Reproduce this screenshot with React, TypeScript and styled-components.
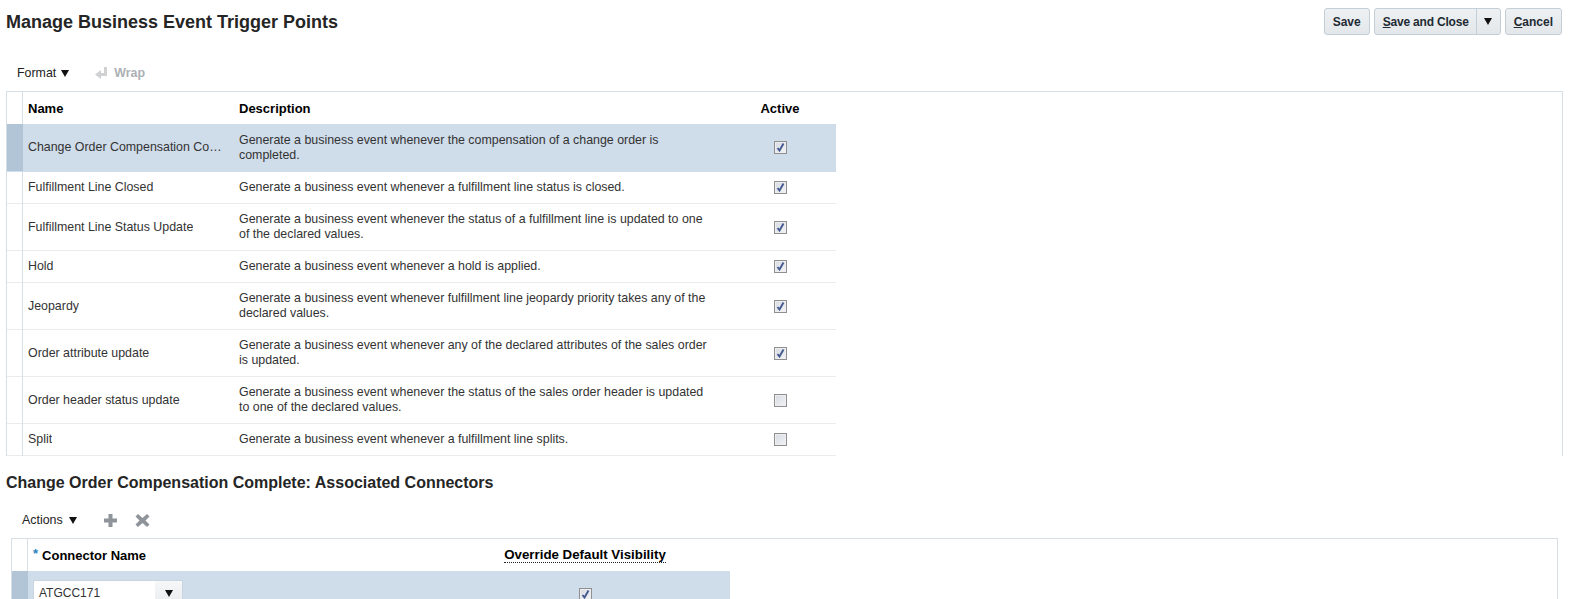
import styled, { createGlobalStyle } from "styled-components";

const GlobalStyle = createGlobalStyle`
  html, body {
    margin: 0;
    padding: 0;
    height: 599px;
    overflow: hidden;
    background: #fff;
    font-family: "Liberation Sans", Arial, sans-serif;
    font-size: 12px;
    color: #333;
  }
`;

const Page = styled.div`
  width: 1569px;
  height: 599px;
  overflow: hidden;
`;

const Header = styled.div`
  display: flex;
  justify-content: space-between;
  align-items: flex-start;
  height: 50px;
  padding: 8px 7px 0 6px;
`;

const Title = styled.h1`
  margin: 4px 0 0;
  font-size: 18px;
  line-height: 20px;
  font-weight: bold;
  color: #252525;
`;

const Buttons = styled.div`
  display: flex;
  gap: 4px;
`;

const Button = styled.div`
  display: flex;
  align-items: center;
  height: 25px;
  padding: 0 8px;
  border: 1px solid #c4ced7;
  border-radius: 3px;
  background: linear-gradient(#eef1f3, #e3e7ea);
  font-size: 12px;
  font-weight: bold;
  color: #1f2a33;
`;

const SplitMain = styled.span`
  display: flex;
  align-items: center;
  height: 100%;
  padding-right: 7px;
  margin-right: 7px;
  border-right: 1px solid #c4ced7;
  letter-spacing: -0.2px;
`;

const Toolbar = styled.div<{ $left: number; $top?: number }>`
  display: flex;
  align-items: center;
  height: 30px;
  margin-top: ${({ $top }) => $top ?? 0}px;
  margin-bottom: 3px;
  padding-left: ${({ $left }) => $left}px;
`;

const Menu = styled.span`
  color: #222;
  font-size: 12.4px;
`;

const Arrow = styled.span<{ $gap?: number }>`
  display: inline-block;
  width: 0;
  height: 0;
  margin-left: ${({ $gap }) => $gap ?? 0}px;
  border-left: 4.5px solid transparent;
  border-right: 4.5px solid transparent;
  border-top: 7px solid #111;
`;

const WrapLabel = styled.span`
  margin-left: 6px;
  font-size: 12.4px;
  font-weight: bold;
  color: #acb0b4;
`;

const ToolIcon = styled.svg<{ $left: number }>`
  display: block;
  margin-left: ${({ $left }) => $left}px;
`;

const TableBox = styled.div<{ $ml: number; $mr: number; $h: number }>`
  margin: 0 ${({ $mr }) => $mr}px 0 ${({ $ml }) => $ml}px;
  height: ${({ $h }) => $h}px;
  border: 1px solid #d6dfe6;
  border-bottom: none;
`;

const Row = styled.div<{ $h: number; $selected?: boolean; $w: number; $plain?: boolean }>`
  display: flex;
  align-items: stretch;
  width: ${({ $w }) => $w}px;
  height: ${({ $h }) => $h}px;
  box-sizing: border-box;
  background: ${({ $selected }) => ($selected ? "#cfdcea" : "transparent")};
  border-bottom: 1px solid ${({ $plain, $selected }) => ($plain || $selected ? "transparent" : "#ebebeb")};
`;

const Gutter = styled.div<{ $selected?: boolean }>`
  flex: 0 0 15px;
  background: ${({ $selected }) => ($selected ? "#b1c5d6" : "transparent")};
  border-right: 1px solid ${({ $selected }) => ($selected ? "#b1c5d6" : "#d6dfe6")};
  margin-bottom: ${({ $selected }) => ($selected ? 0 : -1)}px;
`;

const Cell = styled.div<{ $w: number; $center?: boolean; $head?: boolean; $pr?: number }>`
  flex: 0 0 ${({ $w }) => $w}px;
  min-width: 0;
  box-sizing: border-box;
  display: flex;
  align-items: center;
  justify-content: ${({ $center }) => ($center ? "center" : "flex-start")};
  padding: ${({ $head }) => ($head ? "2px" : "0")} ${({ $pr }) => $pr ?? 5}px 0 5px;
  line-height: 15px;
  font-size: ${({ $head }) => ($head ? "13px" : "12.4px")};
  color: ${({ $head }) => ($head ? "#000" : "#333")};
  font-weight: ${({ $head }) => ($head ? "bold" : "normal")};
`;

const Truncated = styled.span`
  display: block;
  min-width: 0;
  overflow: hidden;
  white-space: nowrap;
  text-overflow: ellipsis;
`;

const Required = styled.span`
  color: #2a7fc0;
  margin-right: 4px;
  position: relative;
  top: -2px;
`;

const Dotted = styled.span`
  border-bottom: 1px dotted #222;
  line-height: 14px;
  font-size: 13.3px;
  white-space: nowrap;
`;

const CheckBox = styled.span`
  display: block;
  width: 11px;
  height: 11px;
  border: 1px solid #8f8f8f;
  background: linear-gradient(135deg, #d6dae2, #f3f4f6);
  box-shadow: inset 0 0 0 1px #eceef1;
  position: relative;
`;

const CheckMark = styled.svg`
  position: absolute;
  left: 1px;
  top: 1px;
`;

const SubTitle = styled.h2`
  margin: 18px 0 0 6px;
  font-size: 16px;
  line-height: 18px;
  font-weight: bold;
  color: #252525;
`;

const SelectBox = styled.div`
  display: flex;
  align-items: center;
  justify-content: space-between;
  width: 150px;
  height: 27px;
  margin-top: 9px;
  box-sizing: border-box;
  border: 1px solid #c9d4df;
  border-radius: 2px;
  background: #fff;
  align-self: flex-start;
`;

const SelectText = styled.span`
  padding-left: 5px;
  font-size: 12px;
`;

const SelectButton = styled.span`
  display: flex;
  align-items: center;
  justify-content: center;
  width: 27px;
  height: 100%;
  background: linear-gradient(#f6f7f8, #e8ebee);
`;

const Underline = styled.u`
  text-decoration-thickness: 1px;
`;

function Check({ on }: { on: boolean }) {
  return (
    <CheckBox>
      {on && (
        <CheckMark width="9" height="9" viewBox="0 0 9 9">
          <path d="M1.500 5 L3.500 7.500 L7.500 0.500" fill="none" stroke="#44598f" strokeWidth="1.9" />
        </CheckMark>
      )}
    </CheckBox>
  );
}

const events = [
  { name: "Change Order Compensation Complete", text: "Generate a business event whenever the compensation of a change order is completed.", h: 48, on: true, selected: true },
  { name: "Fulfillment Line Closed", text: "Generate a business event whenever a fulfillment line status is closed.", h: 32, on: true },
  { name: "Fulfillment Line Status Update", text: "Generate a business event whenever the status of a fulfillment line is updated to one of the declared values.", h: 47, on: true },
  { name: "Hold", text: "Generate a business event whenever a hold is applied.", h: 32, on: true },
  { name: "Jeopardy", text: "Generate a business event whenever fulfillment line jeopardy priority takes any of the declared values.", h: 47, on: true },
  { name: "Order attribute update", text: "Generate a business event whenever any of the declared attributes of the sales order is updated.", h: 47, on: true },
  { name: "Order header status update", text: "Generate a business event whenever the status of the sales order header is updated to one of the declared values.", h: 47, on: false },
  { name: "Split", text: "Generate a business event whenever a fulfillment line splits.", h: 32, on: false },
];

export default function App() {
  return (
    <Page>
      <GlobalStyle />
      <Header>
        <Title>Manage Business Event Trigger Points</Title>
        <Buttons>
          <Button>Save</Button>
          <Button>
            <SplitMain><span><Underline>S</Underline>ave and Close</span></SplitMain>
            <Arrow />
          </Button>
          <Button><span><Underline>C</Underline>ancel</span></Button>
        </Buttons>
      </Header>

      <Toolbar $left={17}>
        <Menu>Format</Menu>
        <Arrow $gap={5} />
        <ToolIcon $left={26} width="13" height="14" viewBox="0 0 13 14">
          <path d="M9 1h3v9H6v3L0 8.500 6 4v3h3z" fill="#cfd1d3" />
        </ToolIcon>
        <WrapLabel>Wrap</WrapLabel>
      </Toolbar>

      <TableBox $ml={6} $mr={6} $h={364}>
        <Row $w={829} $h={32} $plain>
          <Gutter />
          <Cell $w={211} $head>Name</Cell>
          <Cell $w={491} $head>Description</Cell>
          <Cell $w={110} $center $head>Active</Cell>
        </Row>
        {events.map((event) => (
          <Row key={event.name} $w={829} $h={event.h} $selected={event.selected}>
            <Gutter $selected={event.selected} />
            <Cell $w={211} $pr={11}><Truncated>{event.name}</Truncated></Cell>
            <Cell $w={491} $pr={9}>{event.text}</Cell>
            <Cell $w={110} $center><Check on={event.on} /></Cell>
          </Row>
        ))}
      </TableBox>

      <SubTitle>Change Order Compensation Complete: Associated Connectors</SubTitle>

      <Toolbar $left={22} $top={13}>
        <Menu>Actions</Menu>
        <Arrow $gap={6} />
        <ToolIcon $left={26} width="15" height="15" viewBox="0 0 15 15">
          <path d="M5.500 1h4v4.500H14v4H9.500V14h-4V9.500H1v-4h4.500z" fill="#8e9499" />
        </ToolIcon>
        <ToolIcon $left={17} width="15" height="15" viewBox="0 0 15 15">
          <path d="M3 1l4.500 4L12 1l2.500 2.500-4 4 4 4L12 14 7.500 10 3 14 .5 11.500l4-4-4-4z" fill="#8e9499" />
        </ToolIcon>
      </Toolbar>

      <TableBox $ml={11} $mr={11} $h={80}>
        <Row $w={718} $h={32} $plain>
          <Gutter />
          <Cell $w={471} $head><Required>*</Required>Connector Name</Cell>
          <Cell $w={172} $head $center><Dotted>Override Default Visibility</Dotted></Cell>
        </Row>
        <Row $w={718} $h={47} $selected>
          <Gutter $selected />
          <Cell $w={471}>
            <SelectBox>
              <SelectText>ATGCC171</SelectText>
              <SelectButton><Arrow /></SelectButton>
            </SelectBox>
          </Cell>
          <Cell $w={172} $center><Check on /></Cell>
        </Row>
      </TableBox>
    </Page>
  );
}
